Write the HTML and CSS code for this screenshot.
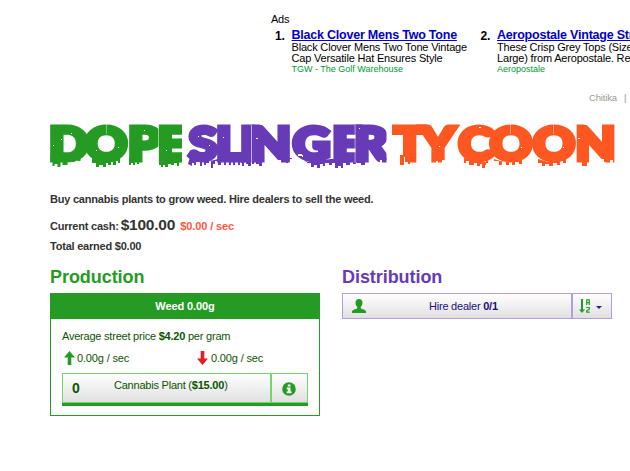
FILE: index.html
```html
<!DOCTYPE html>
<html lang="en">
<head>
<meta charset="utf-8">
<title>Dope Slinger Tycoon</title>
<link rel="stylesheet" href="styles.css">
</head>
<body>
<section class="ads">
  <div class="ads-label">Ads</div>
  <div class="ads-list">
    <article class="ad">
      <span class="ad-num">1.</span>
      <div class="ad-body">
        <a class="ad-title" href="#">Black Clover Mens Two Tone</a>
        <p class="ad-text">Black Clover Mens Two Tone Vintage<br>Cap Versatile Hat Ensures Style</p>
        <span class="ad-site">TGW - The Golf Warehouse</span>
      </div>
    </article>
    <article class="ad">
      <span class="ad-num">2.</span>
      <div class="ad-body">
        <a class="ad-title" href="#">Aeropostale Vintage Str</a>
        <p class="ad-text">These Crisp Grey Tops (Size<br>Large) from Aeropostale. Re</p>
        <span class="ad-site">Aeropostale</span>
      </div>
    </article>
  </div>
  <div class="ads-foot"><span>Chitika</span><span>|</span></div>
</section>
<main class="game">
  <h1 class="logo">
    <svg width="570" height="50" viewBox="48 120 570 50">
      <clipPath id="trim-green"><path d="M48 120h134v50H48z"/></clipPath>
      <clipPath id="trim-purple"><path d="M186 120h200.500v50H186z"/></clipPath>
      <g class="green" clip-path="url(#trim-green)">
        <text transform="scale(1.15 1)" y="160.500" x="42.600 74.200 111.300 137">DOPE</text>
        <path d="M50.500 155h10l10 5 12-4v2h-2v3h-3v-3h-3v4h-4v-2h-3v5h-5v-3h-2v5h-3v-3h-3v2h-2v-4h-2zM92 158l10 4h6l12-4v5h-2v-2h-2v4h-3v-3h-2v3h-3v-2h-2v4h-3v-2h-4v2h-3v-4h-4zM129 157h10v7h-2v-2h-2v3h-2v-2h-2v2h-2zM159 157h23v5h-3v4h-2v-3h-3v2h-3v-1h-3v3h-3v-2h-2v2h-2v-2h-2z"/>
      </g>
      <g class="purple" clip-path="url(#trim-purple)">
        <text transform="scale(1.15 1)" y="160.500" x="164.200 187.800 208.700 218.300 254.500 289 308">SLINGER</text>
        <path d="M188 164l2-7 6 4h14l8-2h22v6h-2v-3h-3v3h-2v-3h-2v3h-2v-3h-3v3h-2v-3h-3v3h-3v-4h-3v3h-2v4h-2v-7h-2v2h-3v2h-2v-3h-2v4h-2v-4h-4v3h-2v-2h-2v3zM241 157h10v9h-3v-2h-2v-2h-2v4h-2v-3h-1zM252 157h10v9h-3v-2h-3v-2h-2v2h-2zM281 158h11v1h-4v4h-2v-4h-3zM300 160l8 2h8l14-3h26v5h-3v-3h-3v4h-4v-2h-3v5h-2v-2h-3v2h-3v-5h-3v2h-3v-2h-4v3h-2v-2h-3v4h-3v-3h-3v2h-3v-4h-4v-2h-3zM357 156h10v6h-2v3h-4v-2h-4z"/>
      </g>
      <g class="orange">
        <text transform="scale(1.15 1)" y="160.500" x="342.600 366 398.800 426 463.500 500.500">TYCOON</text>
        <path d="M400 155h10v9h-2v-7h-4v8h-4zM464 158l12 4h10v-2h2v3h-2v2h-1v3h-3v-4h-2v2h-3v-3h-3v2h-5v-4h-3v2h-2zM494 159l10 3h8l10-3v5h-3v-2h-4v3h-3v-3h-3v3h-3v-3h-4v3h-3v-4h-5zM538 159l10 3h8l10-3v4h-3v-2h-3v4h-3v-2h-4v3h-4v-2h-4v2h-3v-3h-4zM577 155h10v11h-5v-4h-5z"/>
      </g>
      <path class="nicks" d="M404 157h1v5h3v3h-3v-1h-1zM436 161h2v3h-2zM442 160h3v4h-3zM272 158h2v6h-2zM278 160h3v3h-3zM601 159h3v4h-3zM610 160h3v3h-3zM380 160h2v4h-2z"/>
      <path class="nicks" d="M53 145h1v1h-1zM61 139h1v1h-1zM71 133h1v1h-1zM118 147h1v1h-1zM96 150h1v1h-1zM144 130h1v1h-1zM166 150h1v1h-1zM198 136h1v1h-1zM209 145h1v1h-1zM223 137h1v1h-1zM256 138h2v1h-2zM298 154h4v1h1v2h-1v-1h-4zM359 128h1v1h-1zM371 137h1v1h-1zM437 135h1v1h-1zM439 146h1v1h-1zM479 127h2v1h-2zM521 147h1v1h-1zM578 138h2v1h-2zM563 147h1v1h-1zM106.400 124h.4v10h-.4zM510.200 124h.4v10h-.4zM553.500 124h.4v10h-.4zM251 125h.6v38h-.6zM128.400 125h.5v38h-.5zM158.400 125h.5v38h-.5zM354.800 125h.5v38h-.5z"/>
    </svg>
  </h1>
  <p class="intro">Buy cannabis plants to grow weed. Hire dealers to sell the weed.</p>
  <p class="cash"><span class="cash-label">Current cash:</span> <b class="cash-sum">$100.00</b> <b class="cash-rate">$0.00 / sec</b></p>
  <p class="total">Total earned $0.00</p>
  <div class="columns">
    <section class="column">
      <h2 class="head head-green">Production</h2>
      <div class="panel">
        <div class="panel-head">Weed 0.00g</div>
        <div class="panel-body">
          <p class="price">Average street price <b>$4.20</b> per gram</p>
          <div class="rates">
            <span class="rate"><svg width="11" height="14" viewBox="0 0 11 14"><path class="up" d="M5.500 0L11 6.500H7.300V14H3.700V6.500H0z"/></svg>0.00g / sec</span>
            <span class="rate"><svg width="11" height="14" viewBox="0 0 11 14"><path class="down" d="M5.500 14L11 7.500H7.300V0H3.700V7.500H0z"/></svg>0.00g / sec</span>
          </div>
          <div class="buy">
            <div class="buy-main"><b class="count">0</b><span class="buy-name">Cannabis Plant (<b>$15.00</b>)</span></div>
            <div class="buy-info"><svg width="14" height="14" viewBox="0 0 14 14"><circle class="up" cx="7" cy="7" r="6.800"/><path class="nicks" d="M5.800 2.500h2.700v2H5.800zM4.700 5.500h3.800v4h1.100v1.700H4.700V9.500h1.100V7.200H4.700z"/></svg></div>
          </div>
        </div>
      </div>
    </section>
    <section class="column">
      <h2 class="head head-purple">Distribution</h2>
      <div class="hire">
        <div class="hire-main">
          <svg class="user" width="14" height="14" viewBox="0 0 14 14"><path class="up" d="M7 0c2.400 0 3.500 1.700 3.500 3.800 0 1.700-.7 3.200-1.700 4.200v1.500c1.600.8 5.200 1.300 5.200 3V14H0v-1.500c0-1.700 3.600-2.200 5.200-3V8c-1-1-1.700-2.500-1.700-4.200C3.500 1.700 4.600 0 7 0z"/></svg>
          <span class="hire-name">Hire dealer <b>0/1</b></span>
        </div>
        <div class="sort">
          <svg width="12" height="14" viewBox="0 0 12 14"><path class="up" d="M2 0h2v10.500h2L3 14 0 10.500h2z"/><path class="letters" d="M7.700 6V.8h2.600V6M7.700 3.600h2.600M7.300 8.500h3v1.700l-2.600 1.600v1.400h3"/></svg>
          <i class="caret"></i>
        </div>
      </div>
    </section>
  </div>
</main>
</body>
</html>
```

FILE: styles.css
```css
* { box-sizing: border-box; }
body { margin: 0; width: 630px; height: 471px; overflow: hidden; background: #fff; color: #333; font: 11px/14px "Liberation Sans", Arial, sans-serif; letter-spacing: -0.220px; }
p, h1, h2 { margin: 0; }
svg { display: block; flex: none; }
.ads { padding: 13px 0 0 271px; height: 120px; color: #000; white-space: nowrap; overflow: hidden; }
.ads-label { font-size: 11px; line-height: 13px; letter-spacing: -0.220px; }
.ads-list { display: flex; margin-top: 2px; }
.ad { display: flex; width: 205.500px; flex: none; padding-left: 4px; }
.ad-num { width: 16.500px; flex: none; font-weight: bold; font-size: 12px; line-height: 16px; }
.ad-title { display: block; color: #00c; font-weight: bold; font-size: 12.500px; line-height: 14px; }
.ad-text { font-size: 11px; line-height: 11px; letter-spacing: -0.180px; }
.ad-site { display: block; color: #093; font-size: 9px; line-height: 11px; letter-spacing: 0; }
.ads-foot { display: flex; gap: 7px; padding-left: 318px; margin-top: 17px; color: #999; font-size: 9.500px; line-height: 12px; letter-spacing: -0.150px; }
.game { padding-left: 50px; }
.logo { height: 50px; margin-left: -2px; }
.logo text { font: 900 45px Lato, sans-serif; letter-spacing: 0; stroke-width: 4.800px; stroke-linejoin: miter; stroke-miterlimit: 3; }
.green { fill: #259b24; stroke: #259b24; stroke-width: 0; }
.purple { fill: #673ab7; stroke: #673ab7; stroke-width: 0; }
.orange { fill: #ff5722; stroke: #ff5722; stroke-width: 0; }
.nicks { fill: #fff; }
.intro { margin-top: 22px; font-weight: bold; }
.cash { display: flex; align-items: baseline; margin-top: 9px; height: 20px; line-height: 20px; font-weight: bold; }
.cash-label { margin-right: 2px; }
.cash-sum { font-size: 15.500px; margin-right: 5px; }
.cash-rate { color: #ff5740; letter-spacing: -0.100px; }
.total { margin-top: 4px; font-weight: bold; }
.columns { display: flex; gap: 22px; margin-top: 13px; }
.column { width: 270px; }
.head { font-size: 18px; line-height: 22px; height: 27px; letter-spacing: -0.060px; }
.head-green { color: #259b24; }
.head-purple { color: #673ab7; }
.panel { border: 1px solid #259b24; height: 123px; color: #0d5302; }
.panel-head { height: 25px; line-height: 25px; background: #259b24; color: #fff; font-weight: bold; text-align: center; letter-spacing: -0.100px; }
.panel-body { padding: 10px 11px; }
.rates { display: flex; margin-top: 8px; padding-left: 2px; }
.rate { display: flex; gap: 3px; width: 133px; flex: none; letter-spacing: -0.150px; }
.rate:first-child { gap: 2px; }
.up { fill: #259b24; }
.down { fill: #e51c23; }
.buy { display: flex; height: 33px; margin-top: 8px; border-bottom: 3px solid #259b24; }
.buy-main, .buy-info { border: 1px solid #72d572; background: linear-gradient(#fff, #e0e0e0); }
.buy-main { display: flex; width: 209px; padding-left: 9px; }
.count { width: 42px; font-size: 14px; line-height: 28px; }
.buy-name { line-height: 22px; }
.buy-info { width: 37px; display: flex; align-items: center; justify-content: center; padding: 2px 1px 0 0; }
.hire { display: flex; height: 26px; color: #1d0e7e; }
.hire-main, .sort { display: flex; align-items: center; border: 1px solid #b39ddb; background: linear-gradient(#fff, #e0e0e0); }
.hire-main { width: 230px; padding-left: 9px; }
.hire-name { margin-left: 63px; }
.sort { width: 40px; padding-left: 6px; gap: 5px; }
.letters { fill: none; stroke: #259b24; stroke-width: 1.200px; }
.caret { border: 3px solid transparent; border-top-color: #311b92; border-bottom: 0; margin-top: 2px; }
```
